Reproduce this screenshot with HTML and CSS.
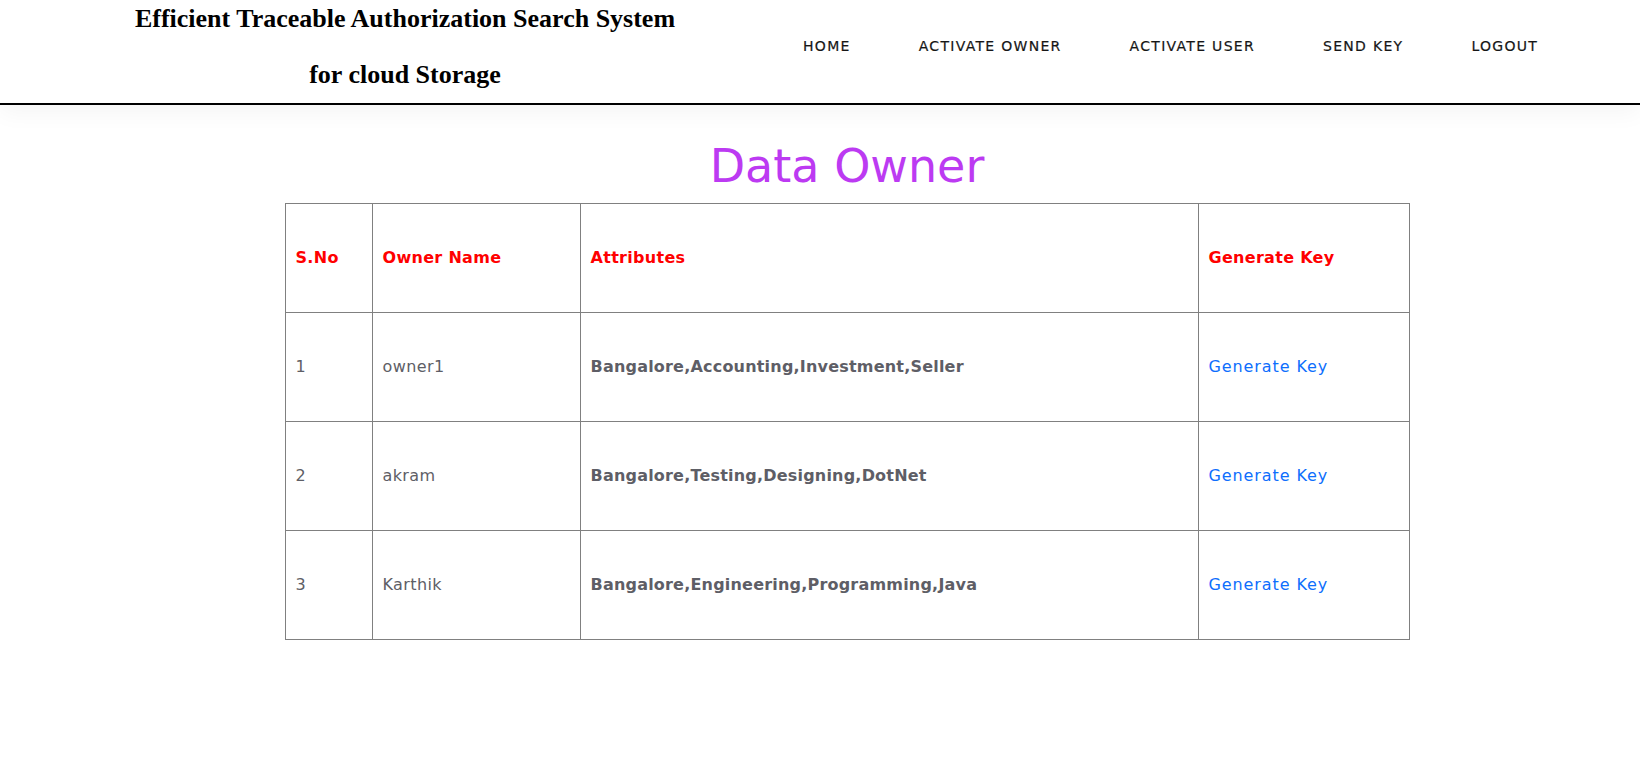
FILE: index.html
```html
<!DOCTYPE html>
<html lang="en">
<head>
<meta charset="utf-8">
<title>Data Owner</title>
<link rel="stylesheet" href="styles.css">
</head>
<body>
<header class="site-header">
  <div class="brand">Efficient Traceable Authorization Search System<br>for cloud Storage</div>
  <nav class="nav">
    <a class="nav-link" href="#">HOME</a>
    <a class="nav-link" href="#">ACTIVATE OWNER</a>
    <a class="nav-link" href="#">ACTIVATE USER</a>
    <a class="nav-link" href="#">SEND KEY</a>
    <a class="nav-link" href="#">LOGOUT</a>
  </nav>
</header>
<main class="content">
  <h1 class="page-title">Data Owner</h1>
  <table class="owners">
    <colgroup>
      <col class="c-sno">
      <col class="c-name">
      <col class="c-attr">
      <col class="c-key">
    </colgroup>
    <thead>
      <tr>
        <th>S.No</th>
        <th>Owner Name</th>
        <th>Attributes</th>
        <th>Generate Key</th>
      </tr>
    </thead>
    <tbody>
      <tr>
        <td>1</td>
        <td>owner1</td>
        <td class="attr">Bangalore,Accounting,Investment,Seller</td>
        <td><a class="gen-link" href="#">Generate Key</a></td>
      </tr>
      <tr>
        <td>2</td>
        <td>akram</td>
        <td class="attr">Bangalore,Testing,Designing,DotNet</td>
        <td><a class="gen-link" href="#">Generate Key</a></td>
      </tr>
      <tr>
        <td>3</td>
        <td>Karthik</td>
        <td class="attr">Bangalore,Engineering,Programming,Java</td>
        <td><a class="gen-link" href="#">Generate Key</a></td>
      </tr>
    </tbody>
  </table>
</main>
</body>
</html>
```

FILE: styles.css
```css
* { box-sizing: border-box; }

html, body {
  margin: 0;
  padding: 0;
  background: #ffffff;
}

body {
  font-family: "DejaVu Sans", "Open Sans", sans-serif;
  color: #5e5e66;
}

.site-header {
  display: flex;
  align-items: flex-start;
  height: 105px;
  border-bottom: 2px solid #000000;
  box-shadow: 0 8px 22px rgba(0, 0, 0, 0.045);
  position: relative;
  z-index: 1;
  background: #ffffff;
}

.brand {
  flex: 0 0 580px;
  margin-left: 115px;
  margin-top: -9px;
  text-align: center;
  white-space: nowrap;
  font-family: "Liberation Serif", "Times New Roman", serif;
  font-weight: bold;
  font-size: 26px;
  line-height: 56px;
  color: #000000;
}

.nav {
  display: flex;
  gap: 68px;
  margin-left: 108px;
  padding-top: 36px;
}

.nav-link {
  font-size: 14px;
  line-height: 20px;
  letter-spacing: 1.3px;
  color: #161616;
  text-decoration: none;
  white-space: nowrap;
  -webkit-text-stroke: 0.2px #161616;
}

.content {
  display: flex;
  flex-direction: column;
  align-items: center;
  padding-left: 54px;
}

.page-title {
  margin: 34px 0 10px;
  font-size: 46px;
  line-height: 54px;
  font-weight: normal;
  color: #bc3af2;
}

.owners {
  border-collapse: collapse;
  table-layout: fixed;
  width: 1124px;
}

.c-sno { width: 87px; }
.c-name { width: 208px; }
.c-attr { width: 618px; }
.c-key { width: 211px; }

.owners th,
.owners td {
  border: 1px solid #808080;
  padding: 42px 10px;
  font-size: 16px;
  line-height: 24px;
  text-align: left;
  vertical-align: middle;
  white-space: nowrap;
}

.owners th {
  color: #ff0000;
  font-weight: bold;
  letter-spacing: 0.3px;
}

.owners td {
  color: #5e5e66;
  font-weight: normal;
  letter-spacing: 0.4px;
}

.owners td.attr {
  font-weight: bold;
  letter-spacing: 0.2px;
}

.gen-link {
  color: #0d6efd;
  text-decoration: none;
  letter-spacing: 0.9px;
}
```
